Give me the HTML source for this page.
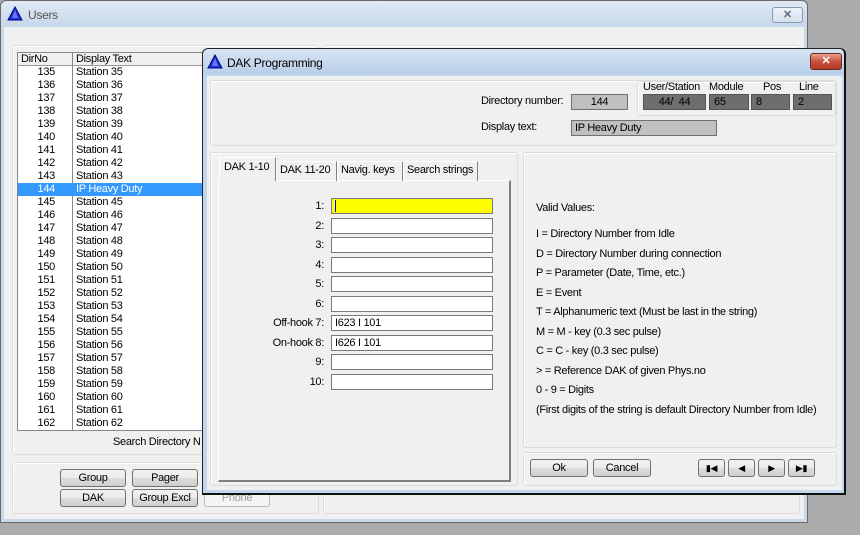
<!DOCTYPE html>
<html><head><style>
*{box-sizing:border-box;margin:0;padding:0}
body{width:860px;height:535px;background:#ababab;font-family:"Liberation Sans",sans-serif;font-size:11px;letter-spacing:-0.3px;color:#000;position:relative;overflow:hidden}
.a{position:absolute;white-space:nowrap}
.grp{position:absolute;border:1px solid #dcdcdc;border-radius:3px;box-shadow:inset 1px 1px 0 #fff}
.btn{position:absolute;height:18px;border:1px solid #707070;border-radius:3px;background:linear-gradient(#f2f2f2,#ebebeb 50%,#dddddd 50%,#cfcfcf);text-align:center;line-height:16px;white-space:nowrap}
.inp{position:absolute;height:16px;border:1px solid #7a7a7a;background:#fff;padding-left:3px;line-height:14px;width:162px;left:331px}
.lbl{position:absolute;width:120px;left:204px;text-align:right;line-height:16px}
.row{position:absolute;left:18px;width:184px;height:13px;line-height:13px}
.row .n{position:absolute;left:0;width:37px;text-align:right}
.row .t{position:absolute;left:58px}
.sel{background:#3399ff;color:#fff}
.dk{position:absolute;top:94px;height:16px;background:#6e6e6e;border:1px solid #555;padding-left:4px;line-height:14px}
</style></head><body>
<div class="a" style="left:0;top:0;width:808px;height:523px;background:#c9d9ea;border:1px solid #6a6a6a;border-radius:6px 6px 0 0"></div>
<div class="a" style="left:1px;top:1px;width:806px;height:26px;background:linear-gradient(#dfe9f5,#c6d7ea);border-radius:6px 6px 0 0"></div>
<svg class="a" style="left:7px;top:6px" width="16" height="15"><polygon points="8,1 15,14 1,14" fill="#2233cc" stroke="#000080"/><polygon points="8,4 11,12 5,12" fill="#6677ff"/></svg>
<div class="a" style="left:28px;top:8px;font-size:12px;color:#555">Users</div>
<div class="a" style="left:772px;top:7px;width:31px;height:16px;border:1px solid #8a9ab0;border-radius:3px;background:linear-gradient(#eef3f9,#d5e0ec);text-align:center;font-weight:bold;color:#5a6a80;line-height:14px">✕</div>
<div class="a" style="left:4px;top:27px;width:800px;height:492px;background:#f0f0f0"></div>
<div class="grp" style="left:12px;top:45px;width:307px;height:410px"></div>
<div class="grp" style="left:323px;top:45px;width:477px;height:410px"></div>
<div class="grp" style="left:12px;top:462px;width:307px;height:52px"></div>
<div class="grp" style="left:323px;top:462px;width:477px;height:52px"></div>
<div class="a" style="left:17px;top:52px;width:190px;height:379px;border:1px solid #828790;background:#fff"></div>
<div class="a" style="left:18px;top:53px;width:188px;height:13px;background:#f0f0f0;border-bottom:1px solid #999"></div>
<div class="a" style="left:72px;top:53px;width:1px;height:377px;background:#828790"></div>
<div class="a" style="left:21px;top:53px;line-height:13px">DirNo</div>
<div class="a" style="left:76px;top:53px;line-height:13px">Display Text</div>
<div id="rows"></div>
<div class="a" style="left:113px;top:436px">Search Directory N</div>
<div class="btn" style="left:60px;top:469px;width:66px">Group</div>
<div class="btn" style="left:132px;top:469px;width:66px">Pager</div>
<div class="btn" style="left:60px;top:489px;width:66px">DAK</div>
<div class="btn" style="left:132px;top:489px;width:66px">Group Excl</div>
<div class="btn" style="left:204px;top:489px;width:66px;border-color:#bbb;background:#f4f4f4;color:#a0a0a0">Phone</div>
<div class="a" style="left:202px;top:48px;width:644px;height:447px;background:#c2d6ec;border:1px solid #222;border-right:2px solid #111;border-bottom:2px solid #111;border-radius:6px 6px 0 0"></div>
<div class="a" style="left:203px;top:49px;width:641px;height:25px;background:linear-gradient(#d6e4f4,#b9cfe8);border-radius:6px 6px 0 0"></div>
<svg class="a" style="left:207px;top:54px" width="16" height="15"><polygon points="8,1 15,14 1,14" fill="#2233cc" stroke="#000080"/><polygon points="8,4 11,12 5,12" fill="#6677ff"/></svg>
<div class="a" style="left:227px;top:56px;font-size:12px">DAK Programming</div>
<div class="a" style="left:810px;top:53px;width:32px;height:17px;border:1px solid #6b2a20;border-radius:3px;background:linear-gradient(#e8a090,#c8503c 50%,#b03a28);text-align:center;color:#fff;font-weight:bold;line-height:15px">✕</div>
<div class="a" style="left:207px;top:76px;width:635px;height:414px;background:#f0f0f0"></div>
<div class="grp" style="left:210px;top:80px;width:627px;height:66px"></div>
<div class="grp" style="left:637px;top:81px;width:199px;height:35px"></div>
<div class="a" style="left:481px;top:95px">Directory number:</div>
<div class="a" style="left:571px;top:94px;width:57px;height:16px;background:#c0c0c0;border:1px solid #707070;text-align:center;line-height:14px">144</div>
<div class="a" style="left:643px;top:81px">User/Station</div>
<div class="a" style="left:709px;top:81px">Module</div>
<div class="a" style="left:763px;top:81px">Pos</div>
<div class="a" style="left:799px;top:81px">Line</div>
<div class="dk" style="left:643px;width:63px;text-align:center;padding:0">44/&nbsp;&nbsp;44</div>
<div class="dk" style="left:709px;width:40px">65</div>
<div class="dk" style="left:751px;width:39px">8</div>
<div class="dk" style="left:793px;width:39px">2</div>
<div class="a" style="left:481px;top:121px">Display text:</div>
<div class="a" style="left:571px;top:120px;width:146px;height:16px;background:#c0c0c0;border:1px solid #707070;padding-left:3px;line-height:14px">IP Heavy Duty</div>
<div class="grp" style="left:210px;top:152px;width:308px;height:334px"></div>
<div class="a" style="left:218px;top:180px;width:293px;height:302px;border:1px solid #fff;border-right:2px solid #808080;border-bottom:2px solid #808080"></div>
<div class="a" style="left:219px;top:157px;width:57px;height:24px;background:#f0f0f0;border:1px solid #fff;border-right:1px solid #808080;border-bottom:none;padding:3px 0 0 4px">DAK 1-10</div>
<div class="a" style="left:276px;top:161px;width:61px;height:20px;border:1px solid #fff;border-right:1px solid #808080;border-bottom:none;padding:2px 0 0 3px">DAK 11-20</div>
<div class="a" style="left:337px;top:161px;width:66px;height:20px;border:1px solid #fff;border-right:1px solid #808080;border-bottom:none;padding:2px 0 0 3px">Navig. keys</div>
<div class="a" style="left:403px;top:161px;width:75px;height:20px;border:1px solid #fff;border-right:1px solid #808080;border-bottom:none;padding:2px 0 0 3px">Search strings</div>
<div id="flds"></div>
<div class="grp" style="left:523px;top:152px;width:314px;height:296px"></div>
<div class="a" style="left:536px;top:199px;line-height:19.5px">Valid Values:<br><div style="height:6.5px"></div>I = Directory Number from Idle<br>D = Directory Number during connection<br>P = Parameter (Date, Time, etc.)<br>E = Event<br>T = Alphanumeric text (Must be last in the string)<br>M = M - key (0.3 sec pulse)<br>C = C - key (0.3 sec pulse)<br>&gt; = Reference DAK of given Phys.no<br>0 - 9 = Digits<br>(First digits of the string is default Directory Number from Idle)</div>
<div class="grp" style="left:523px;top:452px;width:314px;height:34px"></div>
<div class="btn" style="left:530px;top:459px;width:58px">Ok</div>
<div class="btn" style="left:593px;top:459px;width:58px">Cancel</div>
<div class="btn" style="left:698px;top:459px;width:27px;font-size:9px">▮◀</div>
<div class="btn" style="left:728px;top:459px;width:27px;font-size:9px">◀</div>
<div class="btn" style="left:758px;top:459px;width:27px;font-size:9px">▶</div>
<div class="btn" style="left:788px;top:459px;width:27px;font-size:9px">▶▮</div>
<script>
var h='';for(var i=0;i<28;i++){var n=135+i,t=n==144?'IP Heavy Duty':'Station '+(n-100);h+='<div class="row'+(n==144?' sel':'')+'" style="top:'+(66+13*i)+'px"><span class="n">'+n+'</span><span class="t">'+t+'</span></div>';}
document.getElementById('rows').innerHTML=h;
var L=['1:','2:','3:','4:','5:','6:','Off-hook 7:','On-hook 8:','9:','10:'],V=['','','','','','','I623 I 101','I626 I 101','',''],f='';
for(var i=0;i<10;i++){var y=Math.round(198+19.5*i);f+='<div class="lbl" style="top:'+y+'px">'+L[i]+'</div><div class="inp" style="top:'+y+'px'+(i==0?';background:#ffff00':'')+'">'+(i==0?'<span style="display:inline-block;width:1px;height:12px;background:#00f;vertical-align:middle"></span>':V[i])+'</div>';}
document.getElementById('flds').innerHTML=f;
</script>
</body></html>
